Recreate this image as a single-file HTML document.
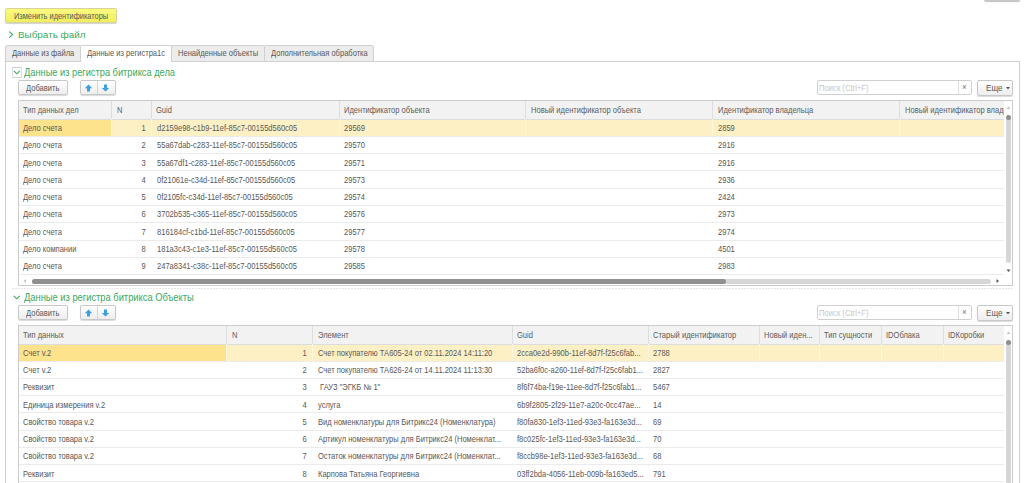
<!DOCTYPE html><html><head><meta charset="utf-8"><title>1C</title><style>
*{margin:0;padding:0;box-sizing:border-box}
html,body{width:1024px;height:483px;overflow:hidden;background:#fff}
body{position:relative;font-family:"Liberation Sans",sans-serif}
.t{position:absolute;white-space:pre;line-height:1;transform-origin:0 0}
.t.r{transform-origin:100% 0}
.b{position:absolute}
.bt{position:absolute;border:1px solid #c8c8c8;border-radius:2px;background:linear-gradient(#ffffff,#ededed);box-shadow:0 1px 1px rgba(0,0,0,.15)}
</style></head><body>
<div class="bt" style="left:984px;top:-10px;width:36px;height:11px;background:#efefef;box-shadow:0 1px 1px rgba(0,0,0,.25)"></div>
<div class="b" style="left:5px;top:8px;width:112px;height:15px;border:1px solid #d6d496;border-radius:2px;background:linear-gradient(#fafa80,#f0ee5e);box-shadow:0 1px 1px rgba(0,0,0,.18)"></div>
<div class="t" style="left:14.00px;top:11.79px;font-size:8.4px;color:#585858;transform:scaleX(0.885);">Изменить идентификаторы</div>
<svg class="b" style="left:8px;top:31px" width="7" height="8"><path d="M1.2 0.6 L4.6 3.6 L1.2 6.6" fill="none" stroke="#3aa95e" stroke-width="1.1"/></svg>
<div class="t" style="left:17.50px;top:29.99px;font-size:9.7px;color:#3aa95e;transform:scaleX(1.02);">Выбрать файл</div>
<div class="b" style="left:5px;top:61px;width:1015px;height:459px;border:1px solid #d0d0d0;background:#fff"></div>
<div class="b" style="left:5px;top:45px;width:76px;height:17px;border:1px solid #d0d0d0;background:#ececec;border-radius:2px 2px 0 0"></div>
<div class="t" style="left:11.50px;top:49.39px;font-size:8.4px;color:#585858;transform:scaleX(0.9);">Данные из файла</div>
<div class="b" style="left:80px;top:45px;width:92px;height:17px;border:1px solid #d0d0d0;border-bottom:none;background:#fff;border-radius:2px 2px 0 0"></div>
<div class="t" style="left:86.50px;top:49.39px;font-size:8.4px;color:#585858;transform:scaleX(0.9);">Данные из регистра1с</div>
<div class="b" style="left:171px;top:45px;width:94px;height:17px;border:1px solid #d0d0d0;background:#ececec;border-radius:2px 2px 0 0"></div>
<div class="t" style="left:177.50px;top:49.39px;font-size:8.4px;color:#585858;transform:scaleX(0.9);">Ненайденные объекты</div>
<div class="b" style="left:264px;top:45px;width:110px;height:17px;border:1px solid #d0d0d0;background:#ececec;border-radius:2px 2px 0 0"></div>
<div class="t" style="left:270.50px;top:49.39px;font-size:8.4px;color:#585858;transform:scaleX(0.9);">Дополнительная обработка</div>
<div class="b" style="left:12px;top:67px;width:10px;height:11px;border:1px solid #dedede;border-top-color:#cfcfcf;border-bottom-color:#d4d4d4"></div>
<svg class="b" style="left:13px;top:70.4px" width="8" height="5"><path d="M0.8 0.8 L3.8 3.8 L6.8 0.8" fill="none" stroke="#3aa95e" stroke-width="1.1"/></svg>
<div class="t" style="left:24.40px;top:67.97px;font-size:10.2px;color:#3aa95e;transform:scaleX(0.909);">Данные из регистра битрикса дела</div>
<div class="bt" style="left:18px;top:80px;width:50px;height:15px"></div>
<div class="t" style="left:26.00px;top:84.19px;font-size:8.4px;color:#585858;transform:scaleX(0.9);">Добавить</div>
<div class="bt" style="left:80px;top:80px;width:36px;height:15px"></div>
<div class="b" style="left:97px;top:81px;width:1px;height:13px;background:#d6d6d6"></div>
<svg class="b" style="left:84px;top:83.5px" width="9" height="9"><path d="M4.5 0.6 L8.2 4.3 L6 4.3 L6 7.6 L3 7.6 L3 4.3 L0.8 4.3 Z" fill="#3a9fe3"/></svg>
<svg class="b" style="left:101px;top:83.5px" width="9" height="9"><path d="M4.5 7.6 L8.2 3.9 L6 3.9 L6 0.6 L3 0.6 L3 3.9 L0.8 3.9 Z" fill="#3a9fe3"/></svg>
<div class="b" style="left:817px;top:80px;width:155px;height:15px;border:1px solid #d0d0d0;border-radius:2px;background:#fff"></div>
<div class="b" style="left:958px;top:81px;width:1px;height:13px;background:#dedede"></div>
<div class="t" style="left:818.80px;top:83.99px;font-size:8.4px;color:#c8c8c8;transform:scaleX(0.915);">Поиск (Ctrl+F)</div>
<div class="t" style="left:962.30px;top:83.18px;font-size:9px;color:#777;transform:scaleX(0.9);">×</div>
<div class="bt" style="left:977px;top:80px;width:36px;height:15.5px"></div>
<div class="t" style="left:985.50px;top:83.88px;font-size:9px;color:#585858;transform:scaleX(0.9);">Еще</div>
<svg class="b" style="left:1006px;top:87px" width="4" height="3"><path d="M0 0 L4 0 L2 2.5 Z" fill="#555"/></svg>
<div class="b" style="left:12px;top:288px;width:1001px;height:1px;background:repeating-linear-gradient(90deg,#e6e6e6 0 2px,transparent 2px 3px)"></div>
<svg class="b" style="left:13px;top:295px" width="8" height="5"><path d="M0.8 0.8 L3.8 3.8 L6.8 0.8" fill="none" stroke="#3aa95e" stroke-width="1.1"/></svg>
<div class="t" style="left:24.40px;top:292.97px;font-size:10.2px;color:#3aa95e;transform:scaleX(0.916);">Данные из регистра битрикса Объекты</div>
<div class="bt" style="left:18px;top:305px;width:50px;height:15px"></div>
<div class="t" style="left:26.00px;top:309.19px;font-size:8.4px;color:#585858;transform:scaleX(0.9);">Добавить</div>
<div class="bt" style="left:80px;top:305px;width:36px;height:15px"></div>
<div class="b" style="left:97px;top:306px;width:1px;height:13px;background:#d6d6d6"></div>
<svg class="b" style="left:84px;top:308.5px" width="9" height="9"><path d="M4.5 0.6 L8.2 4.3 L6 4.3 L6 7.6 L3 7.6 L3 4.3 L0.8 4.3 Z" fill="#3a9fe3"/></svg>
<svg class="b" style="left:101px;top:308.5px" width="9" height="9"><path d="M4.5 7.6 L8.2 3.9 L6 3.9 L6 0.6 L3 0.6 L3 3.9 L0.8 3.9 Z" fill="#3a9fe3"/></svg>
<div class="b" style="left:817px;top:305px;width:155px;height:15px;border:1px solid #d0d0d0;border-radius:2px;background:#fff"></div>
<div class="b" style="left:958px;top:306px;width:1px;height:13px;background:#dedede"></div>
<div class="t" style="left:818.80px;top:308.99px;font-size:8.4px;color:#c8c8c8;transform:scaleX(0.915);">Поиск (Ctrl+F)</div>
<div class="t" style="left:962.30px;top:308.18px;font-size:9px;color:#777;transform:scaleX(0.9);">×</div>
<div class="bt" style="left:977px;top:305px;width:36px;height:15.5px"></div>
<div class="t" style="left:985.50px;top:308.88px;font-size:9px;color:#585858;transform:scaleX(0.9);">Еще</div>
<svg class="b" style="left:1006px;top:312px" width="4" height="3"><path d="M0 0 L4 0 L2 2.5 Z" fill="#555"/></svg>
<div class="b" style="left:18px;top:100px;width:995px;height:186px;border:1px solid #cccccc;background:#fff"></div>
<div class="b" style="left:19px;top:101px;width:985px;height:18.400000000000006px;background:#f2f2f2"></div>
<div class="b" style="left:111.4px;top:101px;width:1.0px;height:18.400000000000006px;background:#dedede"></div>
<div class="b" style="left:151.2px;top:101px;width:1.0px;height:18.400000000000006px;background:#dedede"></div>
<div class="b" style="left:338.5px;top:101px;width:1.0px;height:18.400000000000006px;background:#dedede"></div>
<div class="b" style="left:525.3px;top:101px;width:1.0px;height:18.400000000000006px;background:#dedede"></div>
<div class="b" style="left:712.4px;top:101px;width:1.0px;height:18.400000000000006px;background:#dedede"></div>
<div class="b" style="left:899.4px;top:101px;width:1.0px;height:18.400000000000006px;background:#dedede"></div>
<div class="b" style="left:19px;top:101px;width:92.4px;height:18.400000000000006px;overflow:hidden"><div class="t" style="left:4.30px;top:4.69px;font-size:8.4px;color:#5c5c5c;transform:scaleX(0.9)">Тип данных дел</div></div>
<div class="b" style="left:112.4px;top:101px;width:38.79999999999998px;height:18.400000000000006px;overflow:hidden"><div class="t" style="left:4.30px;top:4.69px;font-size:8.4px;color:#5c5c5c;transform:scaleX(0.9)">N</div></div>
<div class="b" style="left:152.2px;top:101px;width:186.3px;height:18.400000000000006px;overflow:hidden"><div class="t" style="left:4.30px;top:4.69px;font-size:8.4px;color:#5c5c5c;transform:scaleX(0.9)">Guid</div></div>
<div class="b" style="left:339.5px;top:101px;width:185.79999999999995px;height:18.400000000000006px;overflow:hidden"><div class="t" style="left:4.30px;top:4.69px;font-size:8.4px;color:#5c5c5c;transform:scaleX(0.9)">Идентификатор объекта</div></div>
<div class="b" style="left:526.3px;top:101px;width:186.10000000000002px;height:18.400000000000006px;overflow:hidden"><div class="t" style="left:4.30px;top:4.69px;font-size:8.4px;color:#5c5c5c;transform:scaleX(0.9)">Новый идентификатор объекта</div></div>
<div class="b" style="left:713.4px;top:101px;width:186.0px;height:18.400000000000006px;overflow:hidden"><div class="t" style="left:4.30px;top:4.69px;font-size:8.4px;color:#5c5c5c;transform:scaleX(0.9)">Идентификатор владельца</div></div>
<div class="b" style="left:900.4px;top:101px;width:103.60000000000002px;height:18.400000000000006px;overflow:hidden"><div class="t" style="left:4.30px;top:4.69px;font-size:8.4px;color:#5c5c5c;transform:scaleX(0.9)">Новый идентификатор владельца</div></div>
<div class="b" style="left:19px;top:119.4px;width:985px;height:17.30000000000001px;background:#fdf0c5"></div>
<div class="b" style="left:19px;top:119.4px;width:92.4px;height:17.30000000000001px;background:#fce38c"></div>
<div class="b" style="left:19px;top:119px;width:985px;height:1px;background:#dcdcdc"></div>
<div class="b" style="left:111.4px;top:119.4px;width:1.0px;height:16.30000000000001px;background:#fef7df"></div>
<div class="b" style="left:151.2px;top:119.4px;width:1.0px;height:16.30000000000001px;background:#fef7df"></div>
<div class="b" style="left:338.5px;top:119.4px;width:1.0px;height:16.30000000000001px;background:#fef7df"></div>
<div class="b" style="left:525.3px;top:119.4px;width:1.0px;height:16.30000000000001px;background:#fef7df"></div>
<div class="b" style="left:712.4px;top:119.4px;width:1.0px;height:16.30000000000001px;background:#fef7df"></div>
<div class="b" style="left:899.4px;top:119.4px;width:1.0px;height:16.30000000000001px;background:#fef7df"></div>
<div class="b" style="left:19px;top:135.70000000000002px;width:985px;height:1.0px;background:#ebebeb"></div>
<div class="t" style="left:23.30px;top:123.99px;font-size:8.4px;color:#585858;transform:scaleX(0.9);">Дело счета</div>
<div class="t r" style="right:878.10px;top:123.99px;font-size:8.4px;color:#585858;transform:scaleX(0.9);">1</div>
<div class="t" style="left:156.50px;top:123.99px;font-size:8.4px;color:#585858;transform:scaleX(0.9);">d2159e98-c1b9-11ef-85c7-00155d560c05</div>
<div class="t" style="left:343.80px;top:123.99px;font-size:8.4px;color:#585858;transform:scaleX(0.9);">29569</div>
<div class="t" style="left:717.70px;top:123.99px;font-size:8.4px;color:#585858;transform:scaleX(0.9);">2859</div>
<div class="b" style="left:19px;top:153.00000000000003px;width:985px;height:1.0px;background:#ebebeb"></div>
<div class="t" style="left:23.30px;top:141.29px;font-size:8.4px;color:#585858;transform:scaleX(0.9);">Дело счета</div>
<div class="t r" style="right:878.10px;top:141.29px;font-size:8.4px;color:#585858;transform:scaleX(0.9);">2</div>
<div class="t" style="left:156.50px;top:141.29px;font-size:8.4px;color:#585858;transform:scaleX(0.9);">55a67dab-c283-11ef-85c7-00155d560c05</div>
<div class="t" style="left:343.80px;top:141.29px;font-size:8.4px;color:#585858;transform:scaleX(0.9);">29570</div>
<div class="t" style="left:717.70px;top:141.29px;font-size:8.4px;color:#585858;transform:scaleX(0.9);">2916</div>
<div class="b" style="left:19px;top:170.3px;width:985px;height:1.0px;background:#ebebeb"></div>
<div class="t" style="left:23.30px;top:158.59px;font-size:8.4px;color:#585858;transform:scaleX(0.9);">Дело счета</div>
<div class="t r" style="right:878.10px;top:158.59px;font-size:8.4px;color:#585858;transform:scaleX(0.9);">3</div>
<div class="t" style="left:156.50px;top:158.59px;font-size:8.4px;color:#585858;transform:scaleX(0.9);">55a67df1-c283-11ef-85c7-00155d560c05</div>
<div class="t" style="left:343.80px;top:158.59px;font-size:8.4px;color:#585858;transform:scaleX(0.9);">29571</div>
<div class="t" style="left:717.70px;top:158.59px;font-size:8.4px;color:#585858;transform:scaleX(0.9);">2916</div>
<div class="b" style="left:19px;top:187.60000000000002px;width:985px;height:1.0px;background:#ebebeb"></div>
<div class="t" style="left:23.30px;top:175.89px;font-size:8.4px;color:#585858;transform:scaleX(0.9);">Дело счета</div>
<div class="t r" style="right:878.10px;top:175.89px;font-size:8.4px;color:#585858;transform:scaleX(0.9);">4</div>
<div class="t" style="left:156.50px;top:175.89px;font-size:8.4px;color:#585858;transform:scaleX(0.9);">0f21061e-c34d-11ef-85c7-00155d560c05</div>
<div class="t" style="left:343.80px;top:175.89px;font-size:8.4px;color:#585858;transform:scaleX(0.9);">29573</div>
<div class="t" style="left:717.70px;top:175.89px;font-size:8.4px;color:#585858;transform:scaleX(0.9);">2936</div>
<div class="b" style="left:19px;top:204.90000000000003px;width:985px;height:1.0px;background:#ebebeb"></div>
<div class="t" style="left:23.30px;top:193.19px;font-size:8.4px;color:#585858;transform:scaleX(0.9);">Дело счета</div>
<div class="t r" style="right:878.10px;top:193.19px;font-size:8.4px;color:#585858;transform:scaleX(0.9);">5</div>
<div class="t" style="left:156.50px;top:193.19px;font-size:8.4px;color:#585858;transform:scaleX(0.9);">0f2105fc-c34d-11ef-85c7-00155d560c05</div>
<div class="t" style="left:343.80px;top:193.19px;font-size:8.4px;color:#585858;transform:scaleX(0.9);">29574</div>
<div class="t" style="left:717.70px;top:193.19px;font-size:8.4px;color:#585858;transform:scaleX(0.9);">2424</div>
<div class="b" style="left:19px;top:222.20000000000002px;width:985px;height:1.0px;background:#ebebeb"></div>
<div class="t" style="left:23.30px;top:210.49px;font-size:8.4px;color:#585858;transform:scaleX(0.9);">Дело счета</div>
<div class="t r" style="right:878.10px;top:210.49px;font-size:8.4px;color:#585858;transform:scaleX(0.9);">6</div>
<div class="t" style="left:156.50px;top:210.49px;font-size:8.4px;color:#585858;transform:scaleX(0.9);">3702b535-c365-11ef-85c7-00155d560c05</div>
<div class="t" style="left:343.80px;top:210.49px;font-size:8.4px;color:#585858;transform:scaleX(0.9);">29576</div>
<div class="t" style="left:717.70px;top:210.49px;font-size:8.4px;color:#585858;transform:scaleX(0.9);">2973</div>
<div class="b" style="left:19px;top:239.50000000000003px;width:985px;height:1.0px;background:#ebebeb"></div>
<div class="t" style="left:23.30px;top:227.79px;font-size:8.4px;color:#585858;transform:scaleX(0.9);">Дело счета</div>
<div class="t r" style="right:878.10px;top:227.79px;font-size:8.4px;color:#585858;transform:scaleX(0.9);">7</div>
<div class="t" style="left:156.50px;top:227.79px;font-size:8.4px;color:#585858;transform:scaleX(0.9);">816184cf-c1bd-11ef-85c7-00155d560c05</div>
<div class="t" style="left:343.80px;top:227.79px;font-size:8.4px;color:#585858;transform:scaleX(0.9);">29577</div>
<div class="t" style="left:717.70px;top:227.79px;font-size:8.4px;color:#585858;transform:scaleX(0.9);">2974</div>
<div class="b" style="left:19px;top:256.8px;width:985px;height:1.0px;background:#ebebeb"></div>
<div class="t" style="left:23.30px;top:245.09px;font-size:8.4px;color:#585858;transform:scaleX(0.9);">Дело компании</div>
<div class="t r" style="right:878.10px;top:245.09px;font-size:8.4px;color:#585858;transform:scaleX(0.9);">8</div>
<div class="t" style="left:156.50px;top:245.09px;font-size:8.4px;color:#585858;transform:scaleX(0.9);">181a3c43-c1e3-11ef-85c7-00155d560c05</div>
<div class="t" style="left:343.80px;top:245.09px;font-size:8.4px;color:#585858;transform:scaleX(0.9);">29578</div>
<div class="t" style="left:717.70px;top:245.09px;font-size:8.4px;color:#585858;transform:scaleX(0.9);">4501</div>
<div class="b" style="left:19px;top:274.1px;width:985px;height:1.0px;background:#ebebeb"></div>
<div class="t" style="left:23.30px;top:262.39px;font-size:8.4px;color:#585858;transform:scaleX(0.9);">Дело счета</div>
<div class="t r" style="right:878.10px;top:262.39px;font-size:8.4px;color:#585858;transform:scaleX(0.9);">9</div>
<div class="t" style="left:156.50px;top:262.39px;font-size:8.4px;color:#585858;transform:scaleX(0.9);">247a8341-c38c-11ef-85c7-00155d560c05</div>
<div class="t" style="left:343.80px;top:262.39px;font-size:8.4px;color:#585858;transform:scaleX(0.9);">29585</div>
<div class="t" style="left:717.70px;top:262.39px;font-size:8.4px;color:#585858;transform:scaleX(0.9);">2983</div>
<svg class="b" style="left:1006px;top:105.5px" width="5" height="4"><path d="M0.5 3 L4.5 3 L2.5 0.5 Z" fill="#c4c4c4"/></svg>
<div class="b" style="left:1006px;top:114.5px;width:5px;height:148.5px;background:#d6d6d6;border-radius:2.5px"></div>
<div class="b" style="left:1006px;top:114.5px;width:5px;height:5.5px;background:#8f8f8f;border-radius:2.5px"></div>
<svg class="b" style="left:1006px;top:268.5px" width="5" height="4"><path d="M0.5 0.5 L4.5 0.5 L2.5 3 Z" fill="#555"/></svg>
<div class="b" style="left:32px;top:279px;width:959px;height:5px;background:#d6d6d6;border-radius:2.5px"></div>
<div class="b" style="left:32px;top:279px;width:694px;height:5px;background:#8f8f8f;border-radius:2.5px"></div>
<svg class="b" style="left:22.5px;top:279px" width="4" height="5"><path d="M3 0 L3 4 L0.5 2 Z" fill="#c4c4c4"/></svg>
<svg class="b" style="left:995.5px;top:279px" width="4" height="5"><path d="M0.5 0 L0.5 4 L3 2 Z" fill="#555"/></svg>
<div class="b" style="left:18px;top:325px;width:995px;height:275px;border:1px solid #cccccc;background:#fff"></div>
<div class="b" style="left:19px;top:326px;width:985px;height:18.399999999999977px;background:#f2f2f2"></div>
<div class="b" style="left:226.3px;top:326px;width:1.0px;height:18.399999999999977px;background:#dedede"></div>
<div class="b" style="left:312.4px;top:326px;width:1.0px;height:18.399999999999977px;background:#dedede"></div>
<div class="b" style="left:512px;top:326px;width:1px;height:18.399999999999977px;background:#dedede"></div>
<div class="b" style="left:648px;top:326px;width:1px;height:18.399999999999977px;background:#dedede"></div>
<div class="b" style="left:759px;top:326px;width:1px;height:18.399999999999977px;background:#dedede"></div>
<div class="b" style="left:819px;top:326px;width:1px;height:18.399999999999977px;background:#dedede"></div>
<div class="b" style="left:880.7px;top:326px;width:1.0px;height:18.399999999999977px;background:#dedede"></div>
<div class="b" style="left:943px;top:326px;width:1px;height:18.399999999999977px;background:#dedede"></div>
<div class="b" style="left:19px;top:326px;width:207.3px;height:18.399999999999977px;overflow:hidden"><div class="t" style="left:4.30px;top:4.69px;font-size:8.4px;color:#5c5c5c;transform:scaleX(0.9)">Тип данных</div></div>
<div class="b" style="left:227.3px;top:326px;width:85.09999999999997px;height:18.399999999999977px;overflow:hidden"><div class="t" style="left:4.30px;top:4.69px;font-size:8.4px;color:#5c5c5c;transform:scaleX(0.9)">N</div></div>
<div class="b" style="left:313.4px;top:326px;width:198.60000000000002px;height:18.399999999999977px;overflow:hidden"><div class="t" style="left:4.30px;top:4.69px;font-size:8.4px;color:#5c5c5c;transform:scaleX(0.9)">Элемент</div></div>
<div class="b" style="left:513px;top:326px;width:135px;height:18.399999999999977px;overflow:hidden"><div class="t" style="left:4.30px;top:4.69px;font-size:8.4px;color:#5c5c5c;transform:scaleX(0.9)">Guid</div></div>
<div class="b" style="left:649px;top:326px;width:110px;height:18.399999999999977px;overflow:hidden"><div class="t" style="left:4.30px;top:4.69px;font-size:8.4px;color:#5c5c5c;transform:scaleX(0.9)">Старый идентификатор</div></div>
<div class="b" style="left:760px;top:326px;width:59px;height:18.399999999999977px;overflow:hidden"><div class="t" style="left:4.30px;top:4.69px;font-size:8.4px;color:#5c5c5c;transform:scaleX(0.9)">Новый иден...</div></div>
<div class="b" style="left:820px;top:326px;width:60.700000000000045px;height:18.399999999999977px;overflow:hidden"><div class="t" style="left:4.30px;top:4.69px;font-size:8.4px;color:#5c5c5c;transform:scaleX(0.9)">Тип сущности</div></div>
<div class="b" style="left:881.7px;top:326px;width:61.299999999999955px;height:18.399999999999977px;overflow:hidden"><div class="t" style="left:4.30px;top:4.69px;font-size:8.4px;color:#5c5c5c;transform:scaleX(0.9)">IDОблака</div></div>
<div class="b" style="left:944px;top:326px;width:60px;height:18.399999999999977px;overflow:hidden"><div class="t" style="left:4.30px;top:4.69px;font-size:8.4px;color:#5c5c5c;transform:scaleX(0.9)">IDКоробки</div></div>
<div class="b" style="left:19px;top:344.4px;width:985px;height:17.25px;background:#fdf0c5"></div>
<div class="b" style="left:19px;top:344.4px;width:207.3px;height:17.25px;background:#fce38c"></div>
<div class="b" style="left:19px;top:344px;width:985px;height:1px;background:#dcdcdc"></div>
<div class="b" style="left:226.3px;top:344.4px;width:1.0px;height:16.25px;background:#fef7df"></div>
<div class="b" style="left:312.4px;top:344.4px;width:1.0px;height:16.25px;background:#fef7df"></div>
<div class="b" style="left:512px;top:344.4px;width:1px;height:16.25px;background:#fef7df"></div>
<div class="b" style="left:648px;top:344.4px;width:1px;height:16.25px;background:#fef7df"></div>
<div class="b" style="left:759px;top:344.4px;width:1px;height:16.25px;background:#fef7df"></div>
<div class="b" style="left:819px;top:344.4px;width:1px;height:16.25px;background:#fef7df"></div>
<div class="b" style="left:880.7px;top:344.4px;width:1.0px;height:16.25px;background:#fef7df"></div>
<div class="b" style="left:943px;top:344.4px;width:1px;height:16.25px;background:#fef7df"></div>
<div class="b" style="left:19px;top:360.65px;width:985px;height:1.0px;background:#ebebeb"></div>
<div class="t" style="left:23.30px;top:348.99px;font-size:8.4px;color:#585858;transform:scaleX(0.9);">Счет v.2</div>
<div class="t r" style="right:716.90px;top:348.99px;font-size:8.4px;color:#585858;transform:scaleX(0.9);">1</div>
<div class="t" style="left:317.70px;top:348.99px;font-size:8.4px;color:#585858;transform:scaleX(0.9);">Счет покупателю ТА605-24 от 02.11.2024 14:11:20</div>
<div class="t" style="left:517.30px;top:348.99px;font-size:8.4px;color:#585858;transform:scaleX(0.9);">2cca0e2d-990b-11ef-8d7f-f25c6fab...</div>
<div class="t" style="left:653.30px;top:348.99px;font-size:8.4px;color:#585858;transform:scaleX(0.9);">2788</div>
<div class="b" style="left:19px;top:377.9px;width:985px;height:1.0px;background:#ebebeb"></div>
<div class="t" style="left:23.30px;top:366.24px;font-size:8.4px;color:#585858;transform:scaleX(0.9);">Счет v.2</div>
<div class="t r" style="right:716.90px;top:366.24px;font-size:8.4px;color:#585858;transform:scaleX(0.9);">2</div>
<div class="t" style="left:317.70px;top:366.24px;font-size:8.4px;color:#585858;transform:scaleX(0.9);">Счет покупателю ТА626-24 от 14.11.2024 11:13:30</div>
<div class="t" style="left:517.30px;top:366.24px;font-size:8.4px;color:#585858;transform:scaleX(0.9);">52ba6f0c-a260-11ef-8d7f-f25c6fab1...</div>
<div class="t" style="left:653.30px;top:366.24px;font-size:8.4px;color:#585858;transform:scaleX(0.9);">2827</div>
<div class="b" style="left:19px;top:395.15px;width:985px;height:1.0px;background:#ebebeb"></div>
<div class="t" style="left:23.30px;top:383.49px;font-size:8.4px;color:#585858;transform:scaleX(0.9);">Реквизит</div>
<div class="t r" style="right:716.90px;top:383.49px;font-size:8.4px;color:#585858;transform:scaleX(0.9);">3</div>
<div class="t" style="left:317.70px;top:383.49px;font-size:8.4px;color:#585858;transform:scaleX(0.9);"> ГАУЗ &quot;ЭГКБ № 1&quot;</div>
<div class="t" style="left:517.30px;top:383.49px;font-size:8.4px;color:#585858;transform:scaleX(0.9);">8f6f74ba-f19e-11ee-8d7f-f25c6fab1...</div>
<div class="t" style="left:653.30px;top:383.49px;font-size:8.4px;color:#585858;transform:scaleX(0.9);">5467</div>
<div class="b" style="left:19px;top:412.4px;width:985px;height:1.0px;background:#ebebeb"></div>
<div class="t" style="left:23.30px;top:400.74px;font-size:8.4px;color:#585858;transform:scaleX(0.9);">Единица измерения v.2</div>
<div class="t r" style="right:716.90px;top:400.74px;font-size:8.4px;color:#585858;transform:scaleX(0.9);">4</div>
<div class="t" style="left:317.70px;top:400.74px;font-size:8.4px;color:#585858;transform:scaleX(0.9);">услуга</div>
<div class="t" style="left:517.30px;top:400.74px;font-size:8.4px;color:#585858;transform:scaleX(0.9);">6b9f2805-2f29-11e7-a20c-0cc47ae...</div>
<div class="t" style="left:653.30px;top:400.74px;font-size:8.4px;color:#585858;transform:scaleX(0.9);">14</div>
<div class="b" style="left:19px;top:429.65px;width:985px;height:1.0px;background:#ebebeb"></div>
<div class="t" style="left:23.30px;top:417.99px;font-size:8.4px;color:#585858;transform:scaleX(0.9);">Свойство товара v.2</div>
<div class="t r" style="right:716.90px;top:417.99px;font-size:8.4px;color:#585858;transform:scaleX(0.9);">5</div>
<div class="t" style="left:317.70px;top:417.99px;font-size:8.4px;color:#585858;transform:scaleX(0.9);">Вид номенклатуры для Битрикс24 (Номенклатура)</div>
<div class="t" style="left:517.30px;top:417.99px;font-size:8.4px;color:#585858;transform:scaleX(0.9);">f80fa830-1ef3-11ed-93e3-fa163e3d...</div>
<div class="t" style="left:653.30px;top:417.99px;font-size:8.4px;color:#585858;transform:scaleX(0.9);">69</div>
<div class="b" style="left:19px;top:446.9px;width:985px;height:1.0px;background:#ebebeb"></div>
<div class="t" style="left:23.30px;top:435.24px;font-size:8.4px;color:#585858;transform:scaleX(0.9);">Свойство товара v.2</div>
<div class="t r" style="right:716.90px;top:435.24px;font-size:8.4px;color:#585858;transform:scaleX(0.9);">6</div>
<div class="t" style="left:317.70px;top:435.24px;font-size:8.4px;color:#585858;transform:scaleX(0.9);">Артикул номенклатуры для Битрикс24 (Номенклат...</div>
<div class="t" style="left:517.30px;top:435.24px;font-size:8.4px;color:#585858;transform:scaleX(0.9);">f8c025fc-1ef3-11ed-93e3-fa163e3d...</div>
<div class="t" style="left:653.30px;top:435.24px;font-size:8.4px;color:#585858;transform:scaleX(0.9);">70</div>
<div class="b" style="left:19px;top:464.15px;width:985px;height:1.0px;background:#ebebeb"></div>
<div class="t" style="left:23.30px;top:452.49px;font-size:8.4px;color:#585858;transform:scaleX(0.9);">Свойство товара v.2</div>
<div class="t r" style="right:716.90px;top:452.49px;font-size:8.4px;color:#585858;transform:scaleX(0.9);">7</div>
<div class="t" style="left:317.70px;top:452.49px;font-size:8.4px;color:#585858;transform:scaleX(0.9);">Остаток номенклатуры для Битрикс24 (Номенклат...</div>
<div class="t" style="left:517.30px;top:452.49px;font-size:8.4px;color:#585858;transform:scaleX(0.9);">f8ccb98e-1ef3-11ed-93e3-fa163e3d...</div>
<div class="t" style="left:653.30px;top:452.49px;font-size:8.4px;color:#585858;transform:scaleX(0.9);">68</div>
<div class="b" style="left:19px;top:481.4px;width:985px;height:1.0px;background:#ebebeb"></div>
<div class="t" style="left:23.30px;top:469.74px;font-size:8.4px;color:#585858;transform:scaleX(0.9);">Реквизит</div>
<div class="t r" style="right:716.90px;top:469.74px;font-size:8.4px;color:#585858;transform:scaleX(0.9);">8</div>
<div class="t" style="left:317.70px;top:469.74px;font-size:8.4px;color:#585858;transform:scaleX(0.9);">Карпова Татьяна Георгиевна</div>
<div class="t" style="left:517.30px;top:469.74px;font-size:8.4px;color:#585858;transform:scaleX(0.9);">03ff2bda-4056-11eb-009b-fa163ed5...</div>
<div class="t" style="left:653.30px;top:469.74px;font-size:8.4px;color:#585858;transform:scaleX(0.9);">791</div>
<svg class="b" style="left:1006px;top:330.5px" width="5" height="4"><path d="M0.5 3 L4.5 3 L2.5 0.5 Z" fill="#c4c4c4"/></svg>
<div class="b" style="left:1006px;top:339.5px;width:5px;height:180.5px;background:#d6d6d6;border-radius:2.5px"></div>
<div class="b" style="left:1006px;top:339.5px;width:5px;height:5.5px;background:#8f8f8f;border-radius:2.5px"></div>
</body></html>
